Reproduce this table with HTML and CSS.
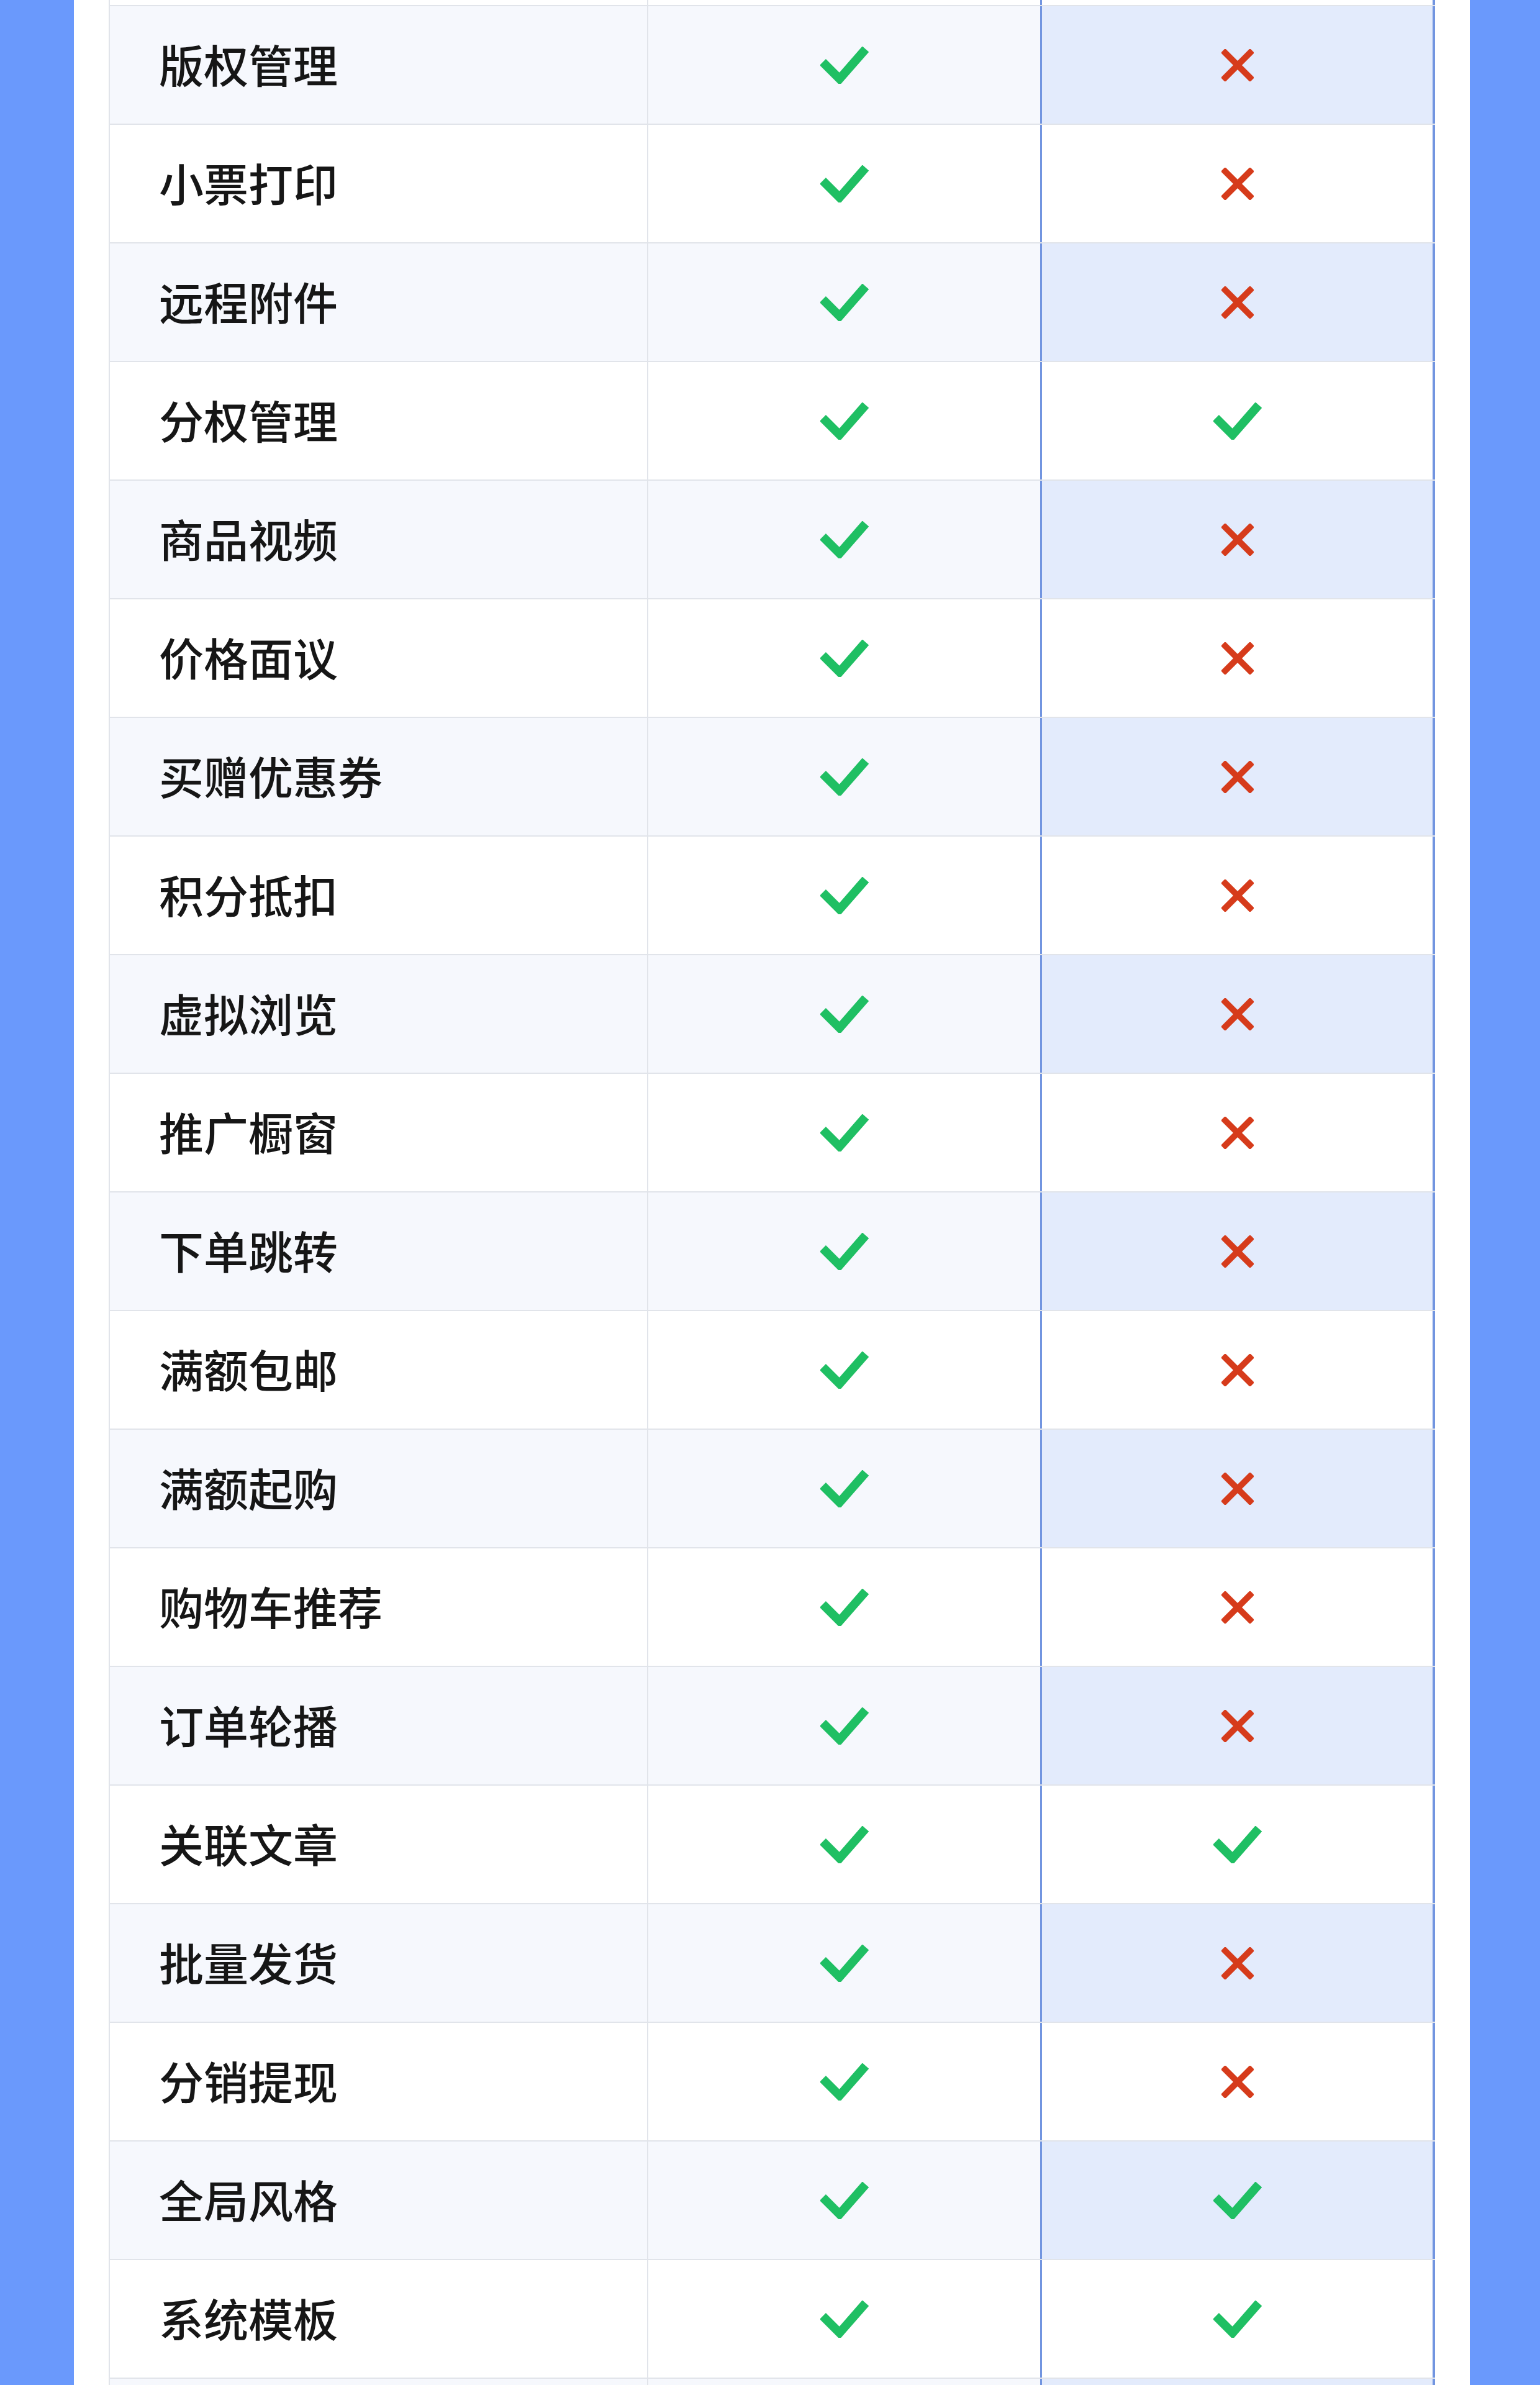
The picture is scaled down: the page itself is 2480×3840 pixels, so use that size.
FILE: index.html
```html
<!DOCTYPE html>
<html lang="zh-CN">
<head>
<meta charset="utf-8">
<title>功能对比</title>
<link rel="stylesheet" href="styles.css">
</head>
<body>
<div class="page">
  <div class="panel">
    <div class="table">
      <div class="row row-edge-top">
        <div class="cell c1"></div><div class="cell c2"></div><div class="cell c3"></div>
      </div>

      <div class="row alt"><div class="cell c1">版权管理</div><div class="cell c2"><svg class="ico-check" viewBox="0 0 78 60"><path d="M4 25 L31 52 L73 4"/></svg></div><div class="cell c3"><svg class="ico-cross" viewBox="0 0 52 52"><path d="M6 6 L46 46 M46 6 L6 46"/></svg></div></div>
      <div class="row"><div class="cell c1">小票打印</div><div class="cell c2"><svg class="ico-check" viewBox="0 0 78 60"><path d="M4 25 L31 52 L73 4"/></svg></div><div class="cell c3"><svg class="ico-cross" viewBox="0 0 52 52"><path d="M6 6 L46 46 M46 6 L6 46"/></svg></div></div>
      <div class="row alt"><div class="cell c1">远程附件</div><div class="cell c2"><svg class="ico-check" viewBox="0 0 78 60"><path d="M4 25 L31 52 L73 4"/></svg></div><div class="cell c3"><svg class="ico-cross" viewBox="0 0 52 52"><path d="M6 6 L46 46 M46 6 L6 46"/></svg></div></div>
      <div class="row"><div class="cell c1">分权管理</div><div class="cell c2"><svg class="ico-check" viewBox="0 0 78 60"><path d="M4 25 L31 52 L73 4"/></svg></div><div class="cell c3"><svg class="ico-check" viewBox="0 0 78 60"><path d="M4 25 L31 52 L73 4"/></svg></div></div>
      <div class="row alt"><div class="cell c1">商品视频</div><div class="cell c2"><svg class="ico-check" viewBox="0 0 78 60"><path d="M4 25 L31 52 L73 4"/></svg></div><div class="cell c3"><svg class="ico-cross" viewBox="0 0 52 52"><path d="M6 6 L46 46 M46 6 L6 46"/></svg></div></div>
      <div class="row"><div class="cell c1">价格面议</div><div class="cell c2"><svg class="ico-check" viewBox="0 0 78 60"><path d="M4 25 L31 52 L73 4"/></svg></div><div class="cell c3"><svg class="ico-cross" viewBox="0 0 52 52"><path d="M6 6 L46 46 M46 6 L6 46"/></svg></div></div>
      <div class="row alt"><div class="cell c1">买赠优惠券</div><div class="cell c2"><svg class="ico-check" viewBox="0 0 78 60"><path d="M4 25 L31 52 L73 4"/></svg></div><div class="cell c3"><svg class="ico-cross" viewBox="0 0 52 52"><path d="M6 6 L46 46 M46 6 L6 46"/></svg></div></div>
      <div class="row"><div class="cell c1">积分抵扣</div><div class="cell c2"><svg class="ico-check" viewBox="0 0 78 60"><path d="M4 25 L31 52 L73 4"/></svg></div><div class="cell c3"><svg class="ico-cross" viewBox="0 0 52 52"><path d="M6 6 L46 46 M46 6 L6 46"/></svg></div></div>
      <div class="row alt"><div class="cell c1">虚拟浏览</div><div class="cell c2"><svg class="ico-check" viewBox="0 0 78 60"><path d="M4 25 L31 52 L73 4"/></svg></div><div class="cell c3"><svg class="ico-cross" viewBox="0 0 52 52"><path d="M6 6 L46 46 M46 6 L6 46"/></svg></div></div>
      <div class="row"><div class="cell c1">推广橱窗</div><div class="cell c2"><svg class="ico-check" viewBox="0 0 78 60"><path d="M4 25 L31 52 L73 4"/></svg></div><div class="cell c3"><svg class="ico-cross" viewBox="0 0 52 52"><path d="M6 6 L46 46 M46 6 L6 46"/></svg></div></div>
      <div class="row alt"><div class="cell c1">下单跳转</div><div class="cell c2"><svg class="ico-check" viewBox="0 0 78 60"><path d="M4 25 L31 52 L73 4"/></svg></div><div class="cell c3"><svg class="ico-cross" viewBox="0 0 52 52"><path d="M6 6 L46 46 M46 6 L6 46"/></svg></div></div>
      <div class="row"><div class="cell c1">满额包邮</div><div class="cell c2"><svg class="ico-check" viewBox="0 0 78 60"><path d="M4 25 L31 52 L73 4"/></svg></div><div class="cell c3"><svg class="ico-cross" viewBox="0 0 52 52"><path d="M6 6 L46 46 M46 6 L6 46"/></svg></div></div>
      <div class="row alt"><div class="cell c1">满额起购</div><div class="cell c2"><svg class="ico-check" viewBox="0 0 78 60"><path d="M4 25 L31 52 L73 4"/></svg></div><div class="cell c3"><svg class="ico-cross" viewBox="0 0 52 52"><path d="M6 6 L46 46 M46 6 L6 46"/></svg></div></div>
      <div class="row"><div class="cell c1">购物车推荐</div><div class="cell c2"><svg class="ico-check" viewBox="0 0 78 60"><path d="M4 25 L31 52 L73 4"/></svg></div><div class="cell c3"><svg class="ico-cross" viewBox="0 0 52 52"><path d="M6 6 L46 46 M46 6 L6 46"/></svg></div></div>
      <div class="row alt"><div class="cell c1">订单轮播</div><div class="cell c2"><svg class="ico-check" viewBox="0 0 78 60"><path d="M4 25 L31 52 L73 4"/></svg></div><div class="cell c3"><svg class="ico-cross" viewBox="0 0 52 52"><path d="M6 6 L46 46 M46 6 L6 46"/></svg></div></div>
      <div class="row"><div class="cell c1">关联文章</div><div class="cell c2"><svg class="ico-check" viewBox="0 0 78 60"><path d="M4 25 L31 52 L73 4"/></svg></div><div class="cell c3"><svg class="ico-check" viewBox="0 0 78 60"><path d="M4 25 L31 52 L73 4"/></svg></div></div>
      <div class="row alt"><div class="cell c1">批量发货</div><div class="cell c2"><svg class="ico-check" viewBox="0 0 78 60"><path d="M4 25 L31 52 L73 4"/></svg></div><div class="cell c3"><svg class="ico-cross" viewBox="0 0 52 52"><path d="M6 6 L46 46 M46 6 L6 46"/></svg></div></div>
      <div class="row"><div class="cell c1">分销提现</div><div class="cell c2"><svg class="ico-check" viewBox="0 0 78 60"><path d="M4 25 L31 52 L73 4"/></svg></div><div class="cell c3"><svg class="ico-cross" viewBox="0 0 52 52"><path d="M6 6 L46 46 M46 6 L6 46"/></svg></div></div>
      <div class="row alt"><div class="cell c1">全局风格</div><div class="cell c2"><svg class="ico-check" viewBox="0 0 78 60"><path d="M4 25 L31 52 L73 4"/></svg></div><div class="cell c3"><svg class="ico-check" viewBox="0 0 78 60"><path d="M4 25 L31 52 L73 4"/></svg></div></div>
      <div class="row"><div class="cell c1">系统模板</div><div class="cell c2"><svg class="ico-check" viewBox="0 0 78 60"><path d="M4 25 L31 52 L73 4"/></svg></div><div class="cell c3"><svg class="ico-check" viewBox="0 0 78 60"><path d="M4 25 L31 52 L73 4"/></svg></div></div>

      <div class="row alt row-edge-bottom">
        <div class="cell c1"></div><div class="cell c2"></div><div class="cell c3"></div>
      </div>
    </div>
  </div>
</div>
</body>
</html>
```

FILE: styles.css
```css
html, body {
  margin: 0;
  padding: 0;
}

body {
  background: #6a99fc;
  font-family: "Noto Sans CJK SC", "Noto Sans", sans-serif;
  color: #161616;
}

.page {
  width: 2480px;
  height: 3840px;
  overflow: hidden;
  display: flex;
}

.panel {
  margin-left: 119px;
  width: 2248px;
  height: 3840px;
  background: #ffffff;
  padding-left: 56px;
  box-sizing: border-box;
  overflow: hidden;
}

.table {
  width: 2136px;
  display: flex;
  flex-direction: column;
}

.row {
  display: grid;
  grid-template-columns: 867px 633px 636px;
  height: 191px;
  border-bottom: 2px solid #e1e4ea;
  box-sizing: border-box;
  background: #ffffff;
}

.row.alt {
  background: #f6f8fd;
}

.row-edge-top {
  height: 10px;
}

.row-edge-bottom {
  height: 40px;
  border-bottom: none;
}

.cell {
  display: flex;
  align-items: center;
  box-sizing: border-box;
  min-width: 0;
}

.c1 {
  border-left: 2px solid #e1e4ea;
  padding-left: 79px;
  padding-bottom: 5px;
  font-size: 72px;
  font-weight: 500;
  line-height: 1;
  letter-spacing: 0;
}

.c2 {
  border-left: 2px solid #e1e4ea;
  justify-content: center;
}

.c3 {
  border-left: 3px solid #7295e0;
  border-right: 4px solid #7295e0;
  justify-content: center;
  background: #ffffff;
}

.row.alt .c3 {
  background: #e3ebfc;
}

.ico-check {
  width: 78px;
  height: 60px;
  display: block;
}

.ico-check path {
  fill: none;
  stroke: #1fbf63;
  stroke-width: 14;
  stroke-linejoin: miter;
  stroke-linecap: butt;
}

.ico-cross {
  width: 52px;
  height: 52px;
  display: block;
}

.ico-cross path {
  fill: none;
  stroke: #d63b1b;
  stroke-width: 10;
  stroke-linecap: square;
}
```
